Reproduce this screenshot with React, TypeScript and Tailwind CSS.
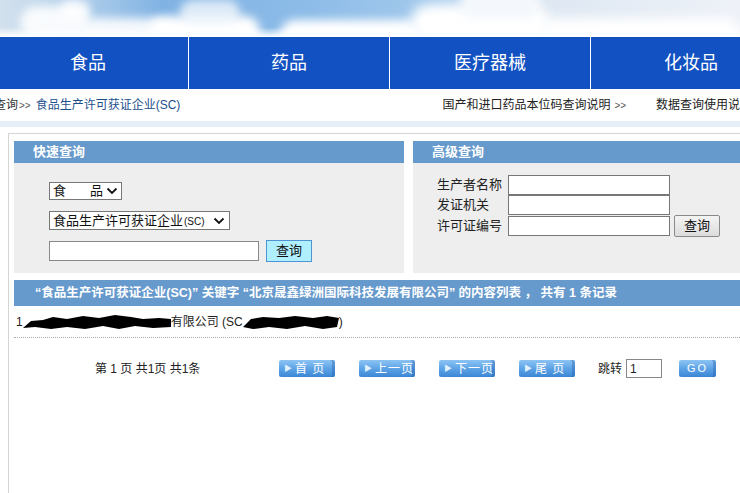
import React from 'react';

const font = { fontFamily: '"Liberation Sans", "Noto Sans CJK SC", sans-serif' };

const Chevron = () => (
  <svg width="12" height="8" viewBox="0 0 12 8" className="shrink-0">
    <path d="M1.5 1.5 L6 6 L10.5 1.5" fill="none" stroke="#111" strokeWidth="1.8" />
  </svg>
);

const PageBtn = ({ label }: { label: string }) => (
  <div className="w-[56px] h-[17px] rounded-[2px] bg-gradient-to-b from-[#8cc4f3] via-[#5ea3e6] to-[#3b86d5] flex items-center text-white text-[12px] leading-none relative shadow-[inset_-3px_0_0_rgba(30,90,170,0.35)]">
    <span className="ml-[5px] text-[8px] text-[#dff0ff]">▶</span>
    <span className="ml-[3px] tracking-[1px]">{label}</span>
  </div>
);

const Scribble = ({ w, d }: { w: number; d: string }) => (
  <svg width={w} height="18" viewBox={`0 0 ${w} 18`} className="shrink-0">
    <path d={d} fill="#000" />
  </svg>
);

export default function App() {
  return (
    <div className="w-[740px] h-[493px] overflow-hidden bg-white relative" style={font}>
      {/* sky banner */}
      <div className="h-[37px] relative overflow-hidden bg-[linear-gradient(90deg,#d3e1ed_0%,#b4d1ec_10%,#80b2e3_22%,#8dbce8_42%,#a3c9ec_58%,#dde7f2_72%,#eef2f8_100%)]">
        <div className="absolute left-[20px] top-[6px] w-[70px] h-[34px] rounded-full bg-white blur-[5px] opacity-90" />
        <div className="absolute left-[80px] top-[18px] w-[90px] h-[30px] rounded-full bg-white blur-[5px] opacity-90" />
        <div className="absolute left-[60px] top-[0px] w-[30px] h-[20px] rounded-full bg-white blur-[4px] opacity-80" />
        <div className="absolute left-[150px] top-[16px] w-[110px] h-[30px] rounded-full bg-white blur-[5px]" />
        <div className="absolute left-[180px] top-[0px] w-[60px] h-[26px] rounded-full bg-[#f2f7fc] blur-[4px] opacity-80" />
        <div className="absolute left-[280px] top-[20px] w-[140px] h-[30px] rounded-full bg-white blur-[5px]" />
        <div className="absolute left-[410px] top-[4px] w-[140px] h-[40px] rounded-full bg-white blur-[6px]" />
        <div className="absolute left-[460px] top-[-8px] w-[80px] h-[26px] rounded-full bg-[#f4f8fc] blur-[5px]" />
        <div className="absolute left-[540px] top-[18px] w-[200px] h-[30px] rounded-full bg-white blur-[6px]" />
        <div className="absolute left-0 right-0 bottom-0 h-[10px] bg-gradient-to-b from-transparent to-white" />
      </div>

      {/* main nav */}
      <div className="h-[52px] bg-[#1151c2] flex ml-[-12px] text-white text-[18px]">
        {['食品', '药品', '医疗器械', '化妆品'].map((t) => (
          <div key={t} className="w-[201px] shrink-0 border-r border-white flex items-center justify-center">
            {t}
          </div>
        ))}
      </div>

      {/* breadcrumb */}
      <div className="h-[32px] flex items-center text-[12px] whitespace-nowrap">
        <span className="ml-[-6px] text-[#333]">查询</span>
        <span className="text-[#555] text-[10px] ml-[1px]">&gt;&gt;</span>
        <span className="ml-[5px] text-[#1e4f8c]">食品生产许可获证企业(SC)</span>
        <span className="ml-[262px] text-[#222]">国产和进口药品本位码查询说明</span>
        <span className="ml-[4px] text-[#555] text-[10px]">&gt;&gt;</span>
        <span className="ml-[30px] text-[#222]">数据查询使用说明</span>
      </div>
      <div className="h-[6px] bg-[#e6eff8]" />

      {/* content box */}
      <div className="mt-[6px] ml-[8px] w-[1000px] h-[400px] border-l border-t border-[#d5d5d5] pt-[7px] pl-[5px]">
        <div className="flex gap-[9px]">
          {/* quick search */}
          <div className="w-[390px]">
            <div className="h-[22px] bg-[#6699cc] text-white font-bold text-[13px] flex items-center pl-[19px]">快速查询</div>
            <div className="h-[110px] bg-[#eeeeee] pl-[35px] pt-[19px] text-[13px] text-[#111]">
              <div className="w-[73px] h-[18px] bg-white border border-[#777] flex items-center px-[3px] whitespace-nowrap">
                <span>食</span>
                <span className="ml-[24px]">品</span>
                <span className="ml-auto">
                  <Chevron />
                </span>
              </div>
              <div className="mt-[11px] w-[181px] h-[19px] bg-white border border-[#777] flex items-center justify-between pl-[3px] pr-[4px] whitespace-nowrap">
                <span>
                  食品生产许可获证企业<span className="text-[10px] ml-[1px]">(SC)</span>
                </span>
                <Chevron />
              </div>
              <div className="mt-[10px] flex items-center">
                <div className="w-[210px] h-[20px] bg-white border border-[#888]" />
                <div className="ml-[7px] w-[46px] h-[22px] bg-[#b0efff] border border-[#4f95d6] flex items-center justify-center text-[13px] text-[#111]">
                  查询
                </div>
              </div>
            </div>
          </div>

          {/* advanced search */}
          <div className="w-[390px]">
            <div className="h-[22px] bg-[#6699cc] text-white font-bold text-[13px] flex items-center pl-[19px]">高级查询</div>
            <div className="h-[110px] bg-[#eeeeee] pl-[24px] pt-[12px] text-[13px] text-[#222]">
              <div className="flex items-center h-[20px]">
                <span className="w-[71px]">生产者名称</span>
                <div className="w-[162px] h-[20px] bg-white border border-[#777]" />
              </div>
              <div className="flex items-center h-[20px] mt-[0px]">
                <span className="w-[71px]">发证机关</span>
                <div className="w-[162px] h-[20px] bg-white border border-[#777]" />
              </div>
              <div className="flex items-center h-[20px] mt-[1px]">
                <span className="w-[71px]">许可证编号</span>
                <div className="w-[162px] h-[20px] bg-white border border-[#777]" />
                <div className="ml-[4px] w-[46px] h-[22px] bg-gradient-to-b from-[#f4f4f4] to-[#dcdcdc] border border-[#8a8a8a] rounded-[2px] flex items-center justify-center text-[#111]">
                  查询
                </div>
              </div>
            </div>
          </div>
        </div>

        {/* results */}
        <div className="mt-[7px] h-[26px] bg-[#6699cc] text-white font-bold text-[12.5px] flex items-center pl-[21px] whitespace-nowrap">
          “食品生产许可获证企业(SC)” 关键字 “北京晟鑫绿洲国际科技发展有限公司” 的内容列表 ， 共有 1 条记录
        </div>
        <div className="w-[726px] h-[32px] border-b border-dotted border-[#aaa] flex items-center text-[12px] text-[#222] pl-[2px] whitespace-nowrap">
          <span>1</span>
          <Scribble
            w={148}
            d="M0 15 L8 8 L20 7 L30 4 L44 6 L60 3 L76 5 L92 2 L108 4 L120 6 L136 5 L148 6 L148 14 L130 15 L112 13 L96 16 L80 13 L62 16 L44 14 L28 16 L12 14 Z"
          />
          <span>有限公司 (SC</span>
          <Scribble
            w={96}
            d="M0 14 L8 6 L20 4 L36 5 L52 3 L70 5 L84 3 L96 5 L94 14 L80 16 L62 13 L44 16 L26 14 L10 16 Z"
          />
          <span>)</span>
        </div>

        {/* pagination */}
        <div className="mt-[21px] h-[19px] flex items-center text-[12px] text-[#222] whitespace-nowrap">
          <div className="w-[265px] pl-[81px]">第 1 页 共1页 共1条</div>
          <div className="flex gap-[24px]">
            <PageBtn label="首 页" />
            <PageBtn label="上一页" />
            <PageBtn label="下一页" />
            <PageBtn label="尾 页" />
          </div>
          <span className="ml-[23px]">跳转</span>
          <div className="ml-[4px] w-[36px] h-[19px] border border-[#888] flex items-center pl-[3px]">1</div>
          <div className="ml-[17px] w-[37px] h-[17px] rounded-[2px] bg-gradient-to-b from-[#8cc4f3] via-[#5ea3e6] to-[#3b86d5] shadow-[inset_-3px_0_0_rgba(30,90,170,0.35)] flex items-center justify-center text-white text-[11px] tracking-[2px]">
            GO
          </div>
        </div>
      </div>
    </div>
  );
}
